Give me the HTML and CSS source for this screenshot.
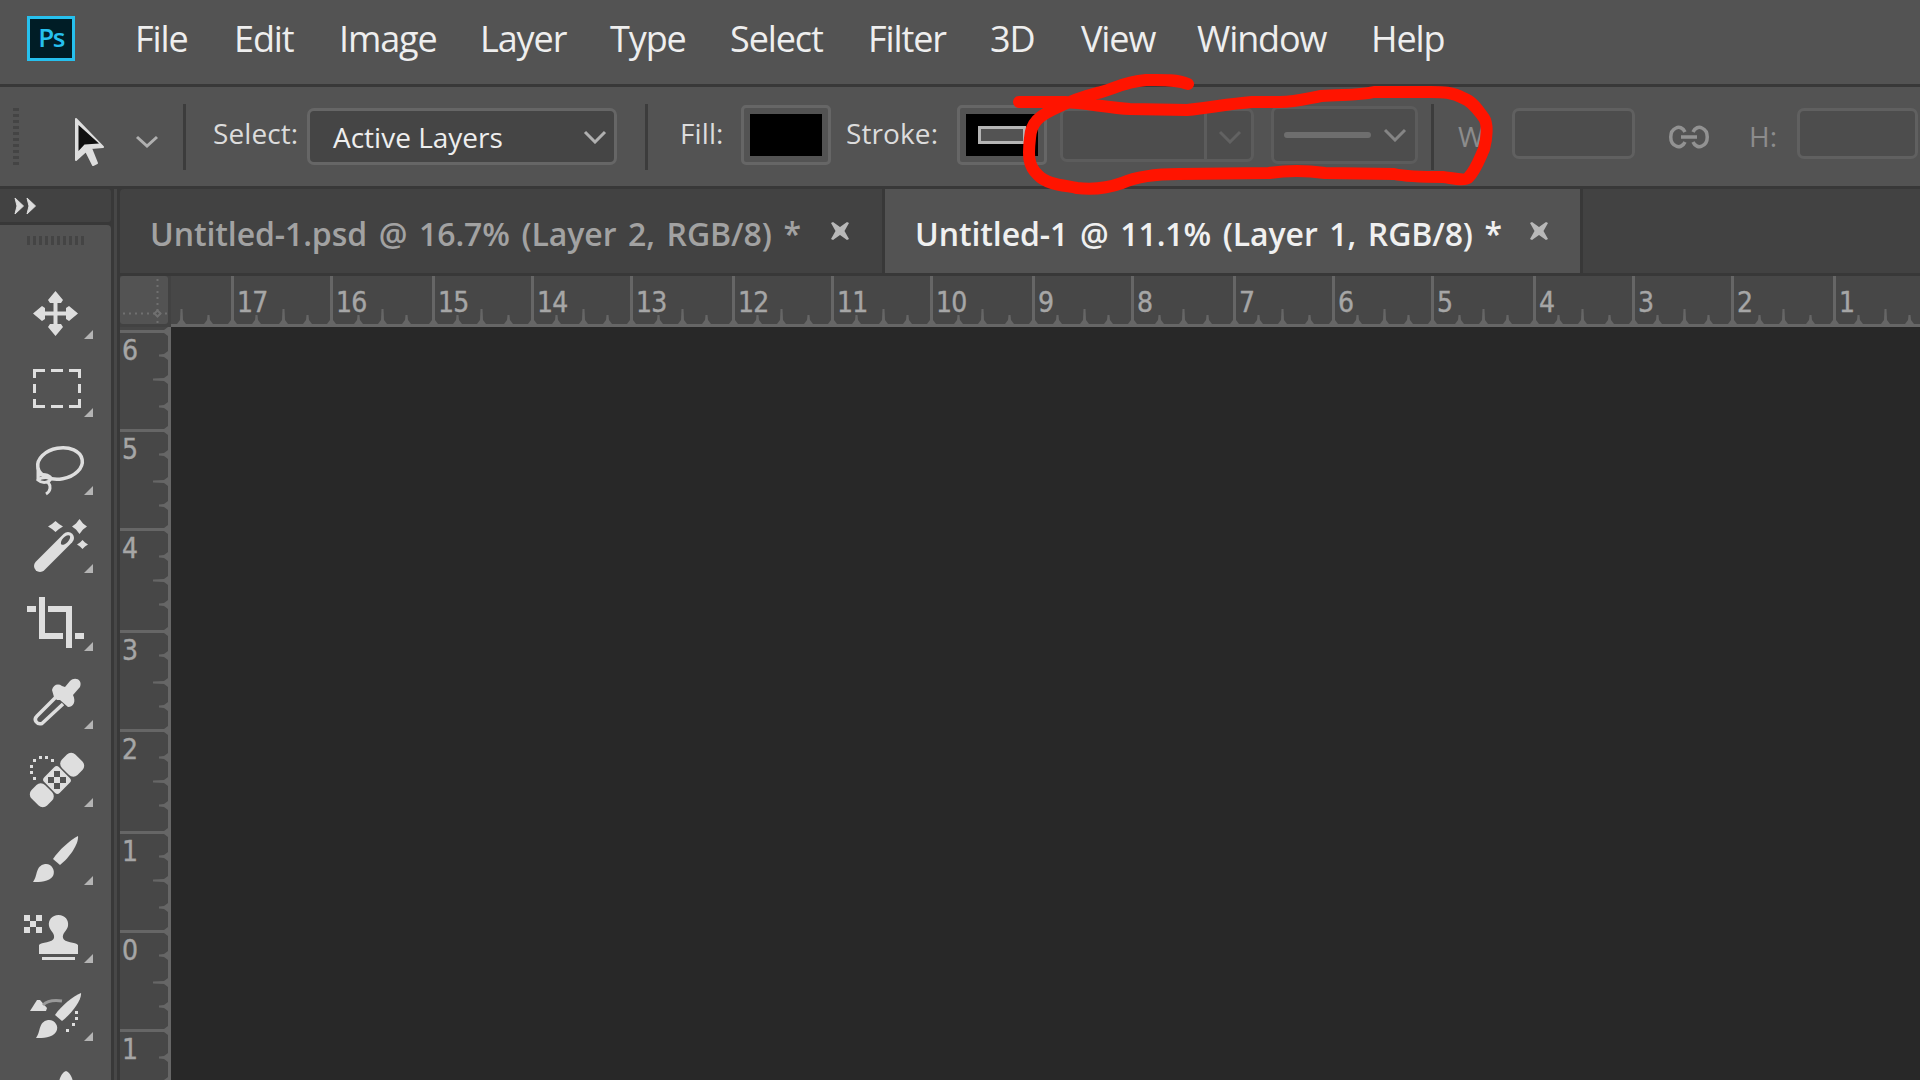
FILE: index.html
```html
<!DOCTYPE html>
<html lang="en">
<head>
  <meta charset="UTF-8">
  <title>Photoshop</title>
  <link rel="stylesheet" href="styles.css">
</head>
<body>
  <div class="app">
    <nav class="menu-bar">
      <div class="logo"><span>Ps</span></div>
      <span class="menu-item">File</span>
      <span class="menu-item">Edit</span>
      <span class="menu-item">Image</span>
      <span class="menu-item">Layer</span>
      <span class="menu-item">Type</span>
      <span class="menu-item">Select</span>
      <span class="menu-item">Filter</span>
      <span class="menu-item">3D</span>
      <span class="menu-item">View</span>
      <span class="menu-item">Window</span>
      <span class="menu-item">Help</span>
    </nav>

    <div class="options-bar">
      <div class="grip"></div>
      <svg class="pointer" width="36" height="54" viewBox="0 0 36 54">
        <path d="M3 4 L3 45 L13 36 L20 50 L24 48 L18 33 L30 32 Z" fill="#dedede" stroke="#dedede" stroke-width="2" stroke-linejoin="round"/>
        <path d="M5.500 10 V36 L11.500 29.500 L26 28.500 Z" fill="#101010"/>
      </svg>
      <svg class="chevron tool-chevron" viewBox="0 0 24 14"><path d="M2 2 L12 11 L22 2"/></svg>
      <div class="divider"></div>
      <span class="label select-label">Select:</span>
      <div class="dropdown">
        <span>Active Layers</span>
        <svg class="chevron" viewBox="0 0 24 14"><path d="M2 2 L12 12 L22 2"/></svg>
      </div>
      <div class="divider divider-2"></div>
      <span class="label fill-label">Fill:</span>
      <div class="swatch"><div class="color"></div></div>
      <span class="label stroke-label">Stroke:</span>
      <div class="swatch"><div class="color"><div class="outline"></div></div></div>
      <div class="stroke-width">
        <svg class="chevron" viewBox="0 0 24 14"><path d="M2 2 L12 12 L22 2"/></svg>
      </div>
      <div class="stroke-type">
        <div class="line"></div>
        <svg class="chevron" viewBox="0 0 24 14"><path d="M2 2 L12 12 L22 2"/></svg>
      </div>
      <div class="divider divider-3"></div>
      <span class="label dim w-label">W:</span>
      <div class="size-input"></div>
      <svg class="link" width="42" height="24" viewBox="0 0 42 24">
        <path d="M17 7 C15 2.500 11 1.500 8 3 C1 6 1 18 8 21 C11 22.500 15 21.500 17 17 M25 7 C27 2.500 31 1.500 34 3 C41 6 41 18 34 21 C31 22.500 27 21.500 25 17 M13 12 H29"/>
      </svg>
      <span class="label dim h-label">H:</span>
      <div class="size-input h-input"></div>
    </div>

    <div class="workspace">
      <aside class="sidebar">
        <div class="collapse">
          <svg width="24" height="18" viewBox="0 0 24 18"><path d="M1 1 L9.500 9 L1 17 L3 9 Z M13 1 L21.500 9 L13 17 L15 9 Z"/></svg>
        </div>
        <div class="tools">
          <div class="tools-grip"></div>
          <svg class="tool" viewBox="0 0 111 78">
            <path d="M53.500 36 H57.500 V47.500 H69 V51.500 H57.500 V63 H53.500 V51.500 H42 V47.500 H53.500 Z"/>
            <path d="M55.500 27 L63 36 L61 39 H50 L48 36 Z M55.500 72 L63 63 L61 60 H50 L48 63 Z M33 49.500 L42 42 L45 44 V55 L42 57 Z M78 49.500 L69 42 L66 44 V55 L69 57 Z"/>
            <path class="more" d="M93 66 V75 H84 Z"/>
          </svg>
          <svg class="tool" viewBox="0 0 111 78">
            <path class="ln sharp" d="M34.500 36 V28.500 H45 M51 28.500 H63 M69 28.500 H79.500 V36 M79.500 42 V51 M79.500 57 V64.500 H69 M63 64.500 H51 M45 64.500 H34.500 V57 M34.500 51 V42"/>
            <path class="more" d="M93 66 V75 H84 Z"/>
          </svg>
          <svg class="tool" viewBox="0 0 111 78">
            <ellipse class="ln" cx="60" cy="43.500" rx="22.500" ry="15.500" transform="rotate(-10 60 43.5)"/>
            <path class="ln thin" d="M38 48 V60 M38 56 C42 53 49 55 51 58 C49 64 41 63 38 60 C41 57 46 57 51 58 M48 62 C51 66 51 71 46 74"/>
            <path class="more" d="M93 66 V75 H84 Z"/>
          </svg>
          <svg class="tool" viewBox="0 0 111 78">
            <path class="body" d="M40 68 L68 40"/>
            <ellipse class="hole" cx="65.500" cy="42" rx="3" ry="6" transform="rotate(43 65.5 42)"/>
            <path d="M55.500 23 L59 26 L63 28.500 L59 31 L55.500 34 L52 31 L48 28.500 L52 26 Z M79.500 21 L83 25.500 L87 28.500 L83 31.500 L79.500 36 L76 31.500 L72 28.500 L76 25.500 Z M82.500 42 L85 44.500 L88 46.500 L85 48.500 L82.500 51 L80 48.500 L77 46.500 L80 44.500 Z"/>
            <path class="more" d="M93 66 V75 H84 Z"/>
          </svg>
          <svg class="tool" viewBox="0 0 111 78">
            <path d="M39 21 H45 V57 H63 V63 H39 Z M48 30 H72 V72 H66 V36 H48 Z M27 30 H36 V36 H27 Z M75 57 H84 V63 H75 Z"/>
            <path class="more" d="M93 66 V75 H84 Z"/>
          </svg>
          <svg class="tool" viewBox="0 0 111 78">
            <path class="ln" d="M56 43 L37 62 C33 66 37 71 42 69.500 L63 50"/>
            <path d="M52 36 C53 31 58 29 62 32 L65 33 L70 27 C75 22 83 26 80 33 L73 41 C76 47 74 53 68 53 L60 46 L57 46 L54 43 Z"/>
            <path class="more" d="M93 66 V75 H84 Z"/>
          </svg>
          <svg class="tool" viewBox="0 0 111 78">
            <g transform="rotate(-45 57 48)">
              <rect x="26" y="37" width="19" height="22" rx="6"/>
              <rect x="46.500" y="37" width="21" height="22" rx="3.500"/>
              <rect x="69" y="37" width="19" height="22" rx="6"/>
            </g>
            <path class="hole" d="M54 39 H60 V45 H54 Z M48 45 H54 V51 H48 Z M60 45 H66 V51 H60 Z M54 51 H60 V57 H54 Z"/>
            <path d="M33 45h3v3h-3z M30 39h3v3h-3z M30 33h3v3h-3z M33 27h3v3h-3z M39 24h3v3h-3z M45 24h3v3h-3z M51 27h3v3h-3z"/>
            <path class="more" d="M93 66 V75 H84 Z"/>
          </svg>
          <svg class="tool" viewBox="0 0 111 78">
            <path d="M78 26 C79 34 69 48 60 55 L53 49 C59 40 70 30 78 26 Z"/>
            <path d="M33 72 C38 66 35 56 45 54 C51 53 56 60 53 66 C49 72 40 72 33 72 Z"/>
            <path class="more" d="M93 66 V75 H84 Z"/>
          </svg>
          <svg class="tool" viewBox="0 0 111 78">
            <path d="M24 27h6v6h-6z M36 27h6v6h-6z M30 33h6v6h-6z M24 39h6v6h-6z M36 39h6v6h-6z"/>
            <path d="M58.500 27 C65 27 69 32 68 38 C67 43 62 45 63 50 C64 55 76 54 78 57 V66 H39 V57 C41 54 53 55 54 50 C55 45 50 43 49 38 C48 32 52 27 58.500 27 Z M42 69 H75 V72 H42 Z"/>
            <path class="more" d="M93 66 V75 H84 Z"/>
          </svg>
          <svg class="tool" viewBox="0 0 111 78">
            <path d="M30 45 L37 34 L40 34 L47 42 L46 45 Z"/>
            <path class="arc" d="M43 39 C48 34 55 34 62 35"/>
            <path d="M81 27 C82 34 71 48 62 55 L55 49 C61 40 73 30 81 27 Z"/>
            <path d="M36 72 C41 66 38 56 48 54 C54 53 60 60 56 66 C52 72 43 72 36 72 Z"/>
            <path d="M75 45h3v3h-3z M75 51h3v3h-3z M72 57h3v3h-3z M66 63h3v3h-3z"/>
            <path class="more" d="M93 66 V75 H84 Z"/>
          </svg>
          <svg class="tool" viewBox="0 0 111 78">
            <path d="M66 27 C69 28 72 32 73 38 H59 C60 32 63 28 66 27 Z"/>
          </svg>
        </div>
      </aside>

      <main class="document">
        <div class="tabs">
          <div class="tab">
            <span>Untitled-1.psd @ 16.7% (Layer 2, RGB/8) *</span>
            <svg class="close" viewBox="0 0 18 18"><path d="M2 0 L9 5 L16 0 L18 1 L13.500 9 L18 17 L16 18 L9 13 L2 18 L0 17 L4.500 9 L0 1 Z"/></svg>
          </div>
          <div class="tab active">
            <span>Untitled-1 @ 11.1% (Layer 1, RGB/8) *</span>
            <svg class="close" viewBox="0 0 18 18"><path d="M2 0 L9 5 L16 0 L18 1 L13.500 9 L18 17 L16 18 L9 13 L2 18 L0 17 L4.500 9 L0 1 Z"/></svg>
          </div>
        </div>
        <div class="view">
          <svg class="corner" width="51" height="51" viewBox="0 0 51 51">
            <rect width="48" height="48" rx="3" fill="#535353"/>
            <path d="M37.500 3 V48 M3 37.500 H48" stroke="#707070" stroke-width="2" stroke-dasharray="2 4"/>
            <path d="M37.500 34.500 L40.500 37.500 L37.500 40.500 L34.500 37.500 Z" fill="#535353" stroke="#707070" stroke-width="2"/>
          </svg>
          <svg class="ruler" id="rulerTop" width="1749" height="51"></svg>
          <svg class="ruler" id="rulerLeft" width="51" height="753"></svg>
          <div class="canvas"></div>
        </div>
      </main>
    </div>

    <!-- freehand marker over the stroke options -->
    <svg class="marker" width="1920" height="220" viewBox="0 0 1920 220">
      <path d="M1188 84 C1176 79 1160 80 1146 80 C1122 82 1112 90 1097 93 C1080 97 1068 102 1052 110 C1040 116 1031 122 1030 138 C1028 155 1028 166 1038 175 C1046 184 1062 185 1077 188 C1094 190 1108 188 1122 183 C1138 176 1156 174 1179 174 L1269 173 C1290 170 1310 171 1325 173 L1394 174 C1408 177 1425 177 1443 177 C1452 178 1464 181 1468 178 C1476 170 1479 160 1484 149 C1487 138 1488 124 1484 118 C1479 112 1474 102 1463 98 C1453 92 1442 92 1431 92 L1374 92 C1356 96 1340 94 1321 96 C1305 99 1296 102 1280 102 L1252 102 C1226 104 1210 108 1187 110 L1130 109 C1110 108 1085 103 1065 102 L1019 102"/>
    </svg>
  </div>

  <script>
    const NS = "http://www.w3.org/2000/svg";

    function add(parent, name, attrs, text) {
      const el = document.createElementNS(NS, name);
      for (const key in attrs) el.setAttribute(key, attrs[key]);
      if (text !== undefined) el.textContent = text;
      parent.appendChild(el);
    }

    // ticks sit on a 3px grid, four to the unit
    function tickPos(start, i) {
      return 3 * Math.round(start + i * 33.375 / 4);
    }

    function drawTop() {
      const ruler = document.getElementById("rulerTop");
      for (let i = -2; i < 68; i++) {
        const x = tickPos(76.85, i) - 171;
        if (i % 4 === 0) {
          add(ruler, "path", { d: `M${x} 51 V0 H${x + 3} V51 Z M${x - 3} 48 L${x} 44 H${x + 3} L${x + 6} 48 Z` });
          add(ruler, "text", { x: x + 6, y: 36 }, 17 - i / 4);
        } else {
          const top = i % 2 === 0 ? 33 : 39;
          add(ruler, "path", { d: `M${x - 3} 48 L${x} 44 L${x + 0.5} ${top} H${x + 2.5} L${x + 3} 44 L${x + 6} 48 Z` });
        }
      }
      add(ruler, "rect", { x: 0, y: 48, width: 1749, height: 3 });
    }

    function drawLeft() {
      const ruler = document.getElementById("rulerLeft");
      for (let i = 0; i < 31; i++) {
        const y = tickPos(109.7, i) - 327;
        if (i % 4 === 0) {
          add(ruler, "path", { d: `M51 ${y} H0 V${y + 3} H51 Z M48 ${y - 3} L44 ${y} V${y + 3} L48 ${y + 6} Z` });
          add(ruler, "text", { x: 2, y: y + 30 }, Math.abs(6 - i / 4));
        } else {
          const left = i % 2 === 0 ? 33 : 39;
          add(ruler, "path", { d: `M48 ${y - 3} L44 ${y} L${left} ${y + 0.5} V${y + 2.5} L44 ${y + 3} L48 ${y + 6} Z` });
        }
      }
      add(ruler, "rect", { x: 48, y: 0, width: 3, height: 753 });
    }

    drawTop();
    drawLeft();
  </script>
</body>
</html>
```
FILE: styles.css
```css
* {
  box-sizing: border-box;
}

body {
  margin: 0;
  background-color: #383838;
  font-family: "Open Sans", "Noto Sans", sans-serif;
  color: #eee;
  overflow: hidden;
}

svg {
  display: block;
  flex-shrink: 0;
}

.app {
  position: relative;
  width: 1920px;
  height: 1080px;
  display: flex;
  flex-direction: column;
  overflow: hidden;
}

/* menu */
.menu-bar {
  height: 84px;
  padding: 0 0 8px 27px;
  display: grid;
  grid-template-columns: 108px 99px 105px 141px 130px 120px 138px 122px 91px 116px 174px 100px;
  align-items: center;
  background-color: #535353;
}

.logo {
  width: 48px;
  height: 45px;
  border: 3px solid #26c0ee;
  background-color: #001d26;
  color: #26c0ee;
  font-size: 26px;
  font-weight: 600;
  line-height: 37px;
  text-align: center;
  letter-spacing: -1.5px;
}

.menu-item {
  padding-top: 1px;
  font-size: 36px;
  font-weight: 500;
  letter-spacing: -1.1px;
  line-height: 75px;
  white-space: nowrap;
}

/* options */
.options-bar {
  height: 99px;
  margin-top: 3px;
  display: flex;
  align-items: center;
  background-color: #535353;
}

.options-bar > * {
  flex-shrink: 0;
}

.grip {
  width: 6px;
  height: 57px;
  margin-left: 13px;
  background: repeating-linear-gradient(#444 0 3px, #535353 3px 6px);
}

.pointer {
  margin: 10px 0 0 54px;
}

.chevron {
  width: 24px;
  height: 14px;
  fill: none;
  stroke: #b0b0b0;
  stroke-width: 3;
}

.tool-chevron {
  margin: 10px 0 0 26px;
}

.divider {
  width: 3px;
  height: 66px;
  margin-left: 24px;
  background-color: #3c3c3c;
}

.label {
  font-size: 28px;
  font-weight: 500;
  line-height: 36px;
  letter-spacing: 0.1px;
  white-space: nowrap;
  color: #dcdcdc;
  margin-bottom: 7px;
}

.select-label {
  width: 94px;
  margin-left: 27px;
}

.dropdown {
  width: 310px;
  height: 57px;
  padding: 0 7px 0 23px;
  display: flex;
  align-items: center;
  justify-content: space-between;
  border: 3px solid #666;
  border-radius: 7px;
  background-color: #454545;
  font-size: 28px;
  font-weight: 500;
  letter-spacing: 0;
}

.divider-2 {
  margin-left: 28px;
}

.fill-label {
  width: 61px;
  margin-left: 32px;
}

.swatch {
  width: 90px;
  height: 60px;
  padding: 6px;
  margin-bottom: 3px;
  border: 3px solid #666;
  border-radius: 5px;
}

.color {
  height: 42px;
  padding: 12px;
  background-color: #000;
}

.outline {
  height: 18px;
  border: 3px solid #b4b4b4;
  background-color: #535353;
}

.stroke-label {
  width: 111px;
  margin-left: 15px;
}

.stroke-width,
.stroke-type,
.size-input {
  border: 3px solid #5c5c5c;
  border-radius: 7px;
  background-color: #4d4d4d;
}

.stroke-width {
  width: 194px;
  height: 54px;
  margin-left: 13px;
  margin-bottom: 3px;
  display: flex;
  align-items: center;
  justify-content: flex-end;
  background: linear-gradient(90deg, #4d4d4d 141px, #5c5c5c 141px 144px, #4d4d4d 144px);
}

.stroke-width .chevron {
  margin-right: 9px;
  margin-top: 4px;
  stroke: #626262;
}

.stroke-type {
  width: 147px;
  height: 58px;
  margin-left: 17px;
  margin-bottom: 3px;
  padding: 0 8px 0 10px;
  display: flex;
  align-items: center;
  justify-content: space-between;
}

.stroke-type .line {
  width: 87px;
  height: 6px;
  border-radius: 3px;
  background-color: #6e6e6e;
}

.stroke-type .chevron {
  stroke: #858585;
}

.divider-3 {
  margin-left: 13px;
}

.dim {
  color: #8c8c8c;
  margin-bottom: 2px;
}

.w-label {
  width: 54px;
  margin-left: 24px;
}

.size-input {
  width: 123px;
  height: 51px;
  margin-bottom: 6px;
  border-color: #606060;
}

.link {
  margin-left: 33px;
  fill: none;
  stroke: #929292;
  stroke-width: 3.5;
}

.h-label {
  width: 48px;
  margin-left: 39px;
}

.h-input {
  width: 121px;
}

/* workspace */
.workspace {
  flex: 1;
  margin-top: 3px;
  min-height: 0;
  display: flex;
}

.sidebar {
  width: 111px;
  display: flex;
  flex-direction: column;
}

.collapse {
  height: 33px;
  padding: 8px 14px;
  border-radius: 0 3px 3px 0;
  background-color: #424242;
  fill: #dcdcdc;
}

.collapse svg {
  stroke: #dcdcdc;
  stroke-width: 1;
}

.tools {
  flex: 1;
  min-height: 0;
  margin-top: 3px;
  overflow: hidden;
  border-radius: 0 4px 0 0;
  background-color: #535353;
}

.tools-grip {
  width: 57px;
  height: 9px;
  margin: 11px 0 19px 27px;
  background: repeating-linear-gradient(90deg, #444 0 3px, #535353 3px 6px);
}

.tool {
  width: 111px;
  height: 78px;
  fill: #dedede;
}

.tool .more {
  fill: #b4b4b4;
}

.tool .hole {
  fill: #535353;
}

.tool .ln {
  fill: none;
  stroke: #dedede;
  stroke-width: 3.5;
}

.tool .sharp {
  stroke-width: 3;
}

.tool .thin {
  stroke-width: 3;
}

.tool .body {
  fill: none;
  stroke: #dedede;
  stroke-width: 12;
  stroke-linecap: round;
}

.tool .arc {
  fill: none;
  stroke: #999;
  stroke-width: 3;
}

.document {
  flex: 1;
  min-width: 0;
  display: flex;
  flex-direction: column;
  margin-left: 3px;
  border-left: 3px solid #474747;
  padding-left: 3px;
}

.tabs {
  height: 84px;
  display: flex;
  border-radius: 4px 0 0 0;
  background-color: #424242;
}

.tab {
  width: 765px;
  padding: 0 33px 0 30px;
  display: flex;
  align-items: center;
  justify-content: space-between;
  border-right: 3px solid #383838;
  font-size: 32px;
  font-weight: 600;
  letter-spacing: -0.1px;
  word-spacing: 3.5px;
  white-space: nowrap;
  color: #a2a2a2;
}

.tab span {
  padding-top: 4px;
}

.tab.active {
  width: 698px;
  padding-right: 32px;
  background-color: #535353;
  color: #f0f0f0;
}

.close {
  width: 18px;
  height: 18px;
  fill: #b8b8b8;
}

.view {
  flex: 1;
  margin-top: 3px;
  display: grid;
  grid-template-columns: 51px 1749px;
  grid-template-rows: 51px 753px;
}

.corner {
  background-color: #424242;
}

.ruler {
  background-color: #474747;
  fill: #666;
}

.ruler text {
  font-family: "DejaVu Sans Condensed", "DejaVu Sans", sans-serif;
  font-stretch: condensed;
  font-size: 28px;
  letter-spacing: -0.8px;
  fill: #a6a6a6;
  stroke: #a6a6a6;
  stroke-width: 0.4px;
}

.canvas {
  background-color: #282828;
}

.marker {
  position: absolute;
  left: 0;
  top: 0;
  fill: none;
  stroke: #ff1400;
  stroke-width: 12;
  stroke-linecap: round;
  stroke-linejoin: round;
}
```
